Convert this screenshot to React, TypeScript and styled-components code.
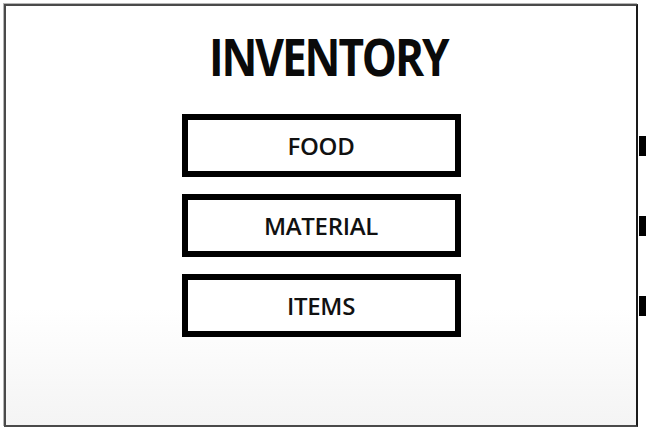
import React from 'react'
import styled, { createGlobalStyle } from 'styled-components'

const GlobalStyle = createGlobalStyle`
  html, body {
    margin: 0;
    padding: 0;
    background: #ffffff;
  }

  body {
    font-family: 'Open Sans', 'Liberation Sans', sans-serif;
    color: #000;
  }
`

const Page = styled.div`
  width: 646px;
  height: 430px;
  padding: 4px 8px 3px 4px;
  box-sizing: border-box;
`

const Frame = styled.div`
  position: relative;
  height: 100%;
  box-sizing: border-box;
  border: 2px solid #4a4a4a;
  border-right-color: #1a1a1a;
  box-shadow: -1px -1px 0 #b5b5b5;
  background: linear-gradient(to bottom, #ffffff 72%, #f4f4f4 100%);
  display: flex;
  flex-direction: column;
  align-items: center;
  padding-top: 24px;
`

// the heading in the mockup is a narrow bold face
const Title = styled.h1`
  margin: 0 0 32px 14px;
  font-family: 'Open Sans', 'Liberation Sans', sans-serif;
  font-size: 52px;
  font-weight: 700;
  line-height: 1;
  letter-spacing: -2.5px;
  color: #0a0a0a;
  transform: scaleX(0.85);
`

const Menu = styled.nav`
  align-self: stretch;
  display: flex;
  flex-direction: column;
  gap: 17px;
`

const Row = styled.div`
  position: relative;
  display: flex;
  justify-content: center;
`

const MenuButton = styled.button`
  width: 279px;
  height: 63px;
  box-sizing: border-box;
  border: 6px solid #000;
  background: #fff;
  font-family: 'Open Sans', 'Liberation Sans', sans-serif;
  font-size: 24px;
  font-weight: 600;
  letter-spacing: -0.3px;
  color: #111;
  cursor: pointer;
  padding: 0;
`

const Tab = styled.span`
  position: absolute;
  right: -10px;
  top: 50%;
  width: 7px;
  height: 20px;
  margin-top: -10px;
  background: #000;
`

const items = ['FOOD', 'MATERIAL', 'ITEMS']

const App: React.FC = () => {
  return (
    <>
      <GlobalStyle />
      <Page>
        <Frame>
          <Title>INVENTORY</Title>
          <Menu>
            {items.map(item => (
              <Row key={item}>
                <MenuButton>{item}</MenuButton>
                <Tab />
              </Row>
            ))}
          </Menu>
        </Frame>
      </Page>
    </>
  )
}

export default App
